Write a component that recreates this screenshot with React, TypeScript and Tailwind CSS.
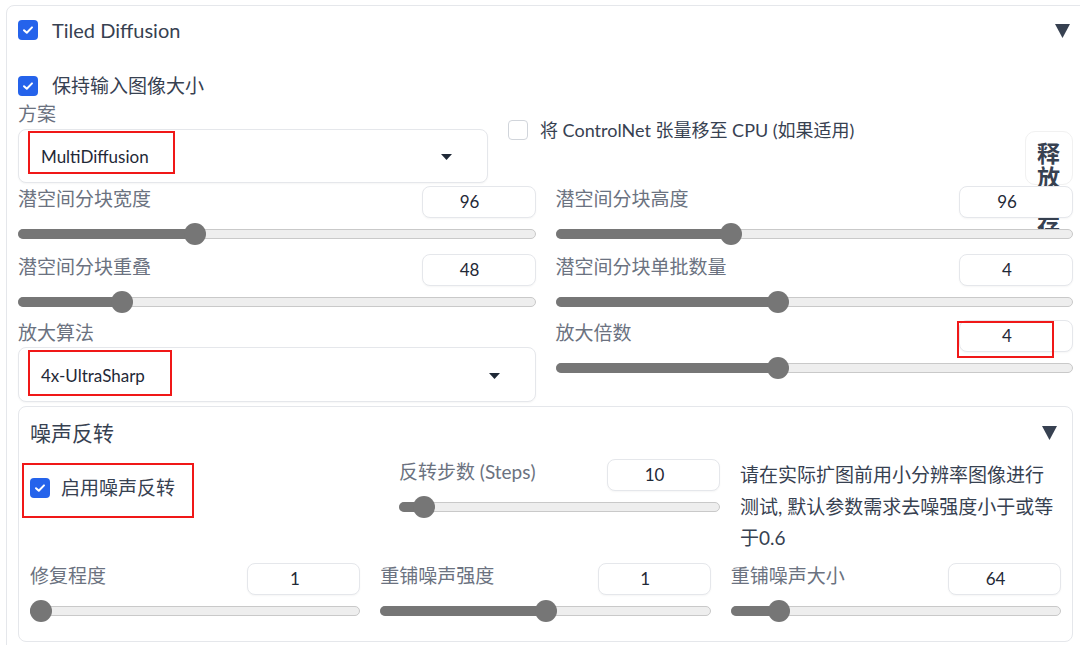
import React from "react";

const FONT = "font-['Lato','Noto_Sans_CJK_SC',sans-serif]";

function Check({ on }: { on: boolean }) {
    if (!on) {
        return <div className="w-[20px] h-[20px] rounded-[4px] border border-[#d1d5db] bg-white shrink-0" />;
    }
    return (
        <div className="w-[20px] h-[20px] rounded-[4px] bg-[#2563eb] flex items-center justify-center shrink-0">
            <svg width="12" height="10" viewBox="0 0 12 10" fill="none">
                <path d="M2 5.2L4.8 7.8L10 2.4" stroke="white" strokeWidth="2" strokeLinecap="round" strokeLinejoin="round" />
            </svg>
        </div>
    );
}

function Tri() {
    return (
        <svg width="15" height="14" viewBox="0 0 15 14">
            <path d="M0 0H15L7.5 14Z" fill="#374151" />
        </svg>
    );
}

function Caret() {
    return (
        <svg width="11" height="6" viewBox="0 0 11 6">
            <path d="M0 0H11L5.5 6Z" fill="#1f2937" />
        </svg>
    );
}

function Slider({ pct }: { pct: number }) {
    return (
        <div className="relative h-[36px]">
            <div className="absolute left-0 right-0 top-[11px] h-[10px] rounded-full bg-[#eeeeee] border border-[#c9c9c9]" />
            <div className="absolute left-0 top-[11px] h-[10px] rounded-full bg-[#767676]" style={{ width: `${pct}%` }} />
            <div
                className="absolute top-[5px] w-[22px] h-[22px] -ml-[11px] rounded-full bg-[#767676]"
                style={{ left: `${pct}%` }}
            />
        </div>
    );
}

function Field({ label, value, pct, boxW = 114, marked = false }: { label: string; value: string; pct: number; boxW?: number; marked?: boolean }) {
    return (
        <div>
            <div className="flex justify-between items-start h-[32px]">
                <span className="text-[19px] leading-[22px] text-[#6b7280] mt-[2px]">{label}</span>
                <div
                    className="relative h-[32px] rounded-[8px] border border-[#e5e7eb] bg-white flex items-center justify-center pr-[18px] text-[17px] text-[#1f2937] shadow-[0_1px_2px_rgba(0,0,0,0.04)]"
                    style={{ width: boxW }}
                >
                    {value}
                    {marked && <div className="absolute -left-[3px] top-0 w-[97px] h-[37px] border-2 border-[#f01818]" />}
                </div>
            </div>
            <Slider pct={pct} />
        </div>
    );
}

function Dropdown({ text, h, redTop, redW, redH }: { text: string; h: number; redTop: number; redW: number; redH: number }) {
    return (
        <div
            className="relative rounded-[8px] border border-[#e5e7eb] bg-white flex items-center justify-between pl-[22px] pr-[35px] pt-[2px] shadow-[0_1px_2px_rgba(0,0,0,0.04)]"
            style={{ height: h }}
        >
            <span className="text-[17px] text-[#1f2937]">{text}</span>
            <Caret />
            <div className="absolute left-[9px] border-2 border-[#f01818]" style={{ top: redTop, width: redW, height: redH }} />
        </div>
    );
}

export default function App() {
    return (
        <div className={`w-[1080px] h-[645px] overflow-hidden bg-white ${FONT}`}>
            <div className="mt-[5px] ml-[6px] w-[1090px] border border-[#e5e7eb] rounded-[8px] pl-[11px] pr-[22px] pt-[12px] pb-[20px]">
                {/* header */}
                <div className="flex items-center h-[24px]">
                    <Check on />
                    <span className="ml-[14px] text-[20px] text-[#374151]">Tiled Diffusion</span>
                    <div className="ml-auto mr-[3px] mt-[2px] flex items-center">
                        <Tri />
                    </div>
                </div>

                <div className="flex items-center h-[24px] mt-[32px]">
                    <Check on />
                    <span className="ml-[14px] text-[19px] text-[#374151]">保持输入图像大小</span>
                </div>

                {/* method row */}
                <div className="flex mt-[5px]">
                    <div className="w-[470px]">
                        <div className="text-[19px] leading-[22px] text-[#6b7280]">方案</div>
                        <div className="mt-[4px]">
                            <Dropdown text="MultiDiffusion" h={54} redTop={1} redW={147} redH={43} />
                        </div>
                    </div>
                    <div className="ml-[20px] flex-1 pt-[17px]">
                        <div className="flex items-center h-[20px]">
                            <Check on={false} />
                            <span className="ml-[12px] text-[18px] text-[#374151]">将 ControlNet 张量移至 CPU (如果适用)</span>
                        </div>
                    </div>
                    <div className="relative mt-[28px] w-[48px] h-[54px] rounded-[10px] border border-[#f1f1f1] bg-white">
                        <div className="absolute left-[11px] top-[9px] w-[24px] text-[23px] leading-[24px] font-bold text-[#374151]">
                            释放显存
                        </div>
                    </div>
                </div>

                {/* sliders grid */}
                <div className="relative z-10 grid grid-cols-2 gap-x-5 mt-[1px]">
                    <div className="flex flex-col">
                        <Field label="潜空间分块宽度" value="96" pct={34.2} />
                        <Field label="潜空间分块重叠" value="48" pct={20} />
                        <div className="text-[19px] leading-[22px] text-[#6b7280]">放大算法</div>
                        <div className="mt-[3px]">
                            <Dropdown text="4x-UltraSharp" h={55} redTop={2} redW={144} redH={46} />
                        </div>
                    </div>
                    <div className="flex flex-col">
                        <Field label="潜空间分块高度" value="96" pct={34} />
                        <Field label="潜空间分块单批数量" value="4" pct={43} />
                        <div className="-mt-[2px]">
                            <Field label="放大倍数" value="4" pct={43} marked />
                        </div>
                    </div>
                </div>

                {/* noise inversion */}
                <div className="mt-[4px] w-[1055px] border border-[#e5e7eb] rounded-[8px] px-[11px] pt-[11px] pb-[10px]">
                    <div className="flex items-center justify-between h-[30px]">
                        <span className="text-[21px] text-[#374151]">噪声反转</span>
                        <div className="mr-[4px] flex items-center">
                            <Tri />
                        </div>
                    </div>

                    <div className="flex mt-[11px]">
                        <div className="flex-1">
                            <div className="mt-[4px] -ml-[8px] w-[172px] h-[55px] border-2 border-[#f01818] pl-[6px] pt-[13px]">
                                <div className="flex items-center h-[20px]">
                                    <Check on />
                                    <span className="ml-[11px] text-[19px] text-[#374151]">启用噪声反转</span>
                                </div>
                            </div>
                        </div>
                        <div className="ml-[20px] w-[321px]">
                            <Field label="反转步数 (Steps)" value="10" pct={7.8} boxW={113} />
                        </div>
                        <div className="ml-[20px] w-[321px] text-[19px] leading-[31.5px] text-[#374151]">
                            请在实际扩图前用小分辨率图像进行测试, 默认参数需求去噪强度小于或等于0.6
                        </div>
                    </div>

                    <div className="grid grid-cols-3 gap-x-5 mt-[9px]">
                        <Field label="修复程度" value="1" pct={3.3} boxW={113} />
                        <Field label="重铺噪声强度" value="1" pct={50.3} boxW={113} />
                        <Field label="重铺噪声大小" value="64" pct={14.5} boxW={113} />
                    </div>
                </div>
            </div>
        </div>
    );
}
